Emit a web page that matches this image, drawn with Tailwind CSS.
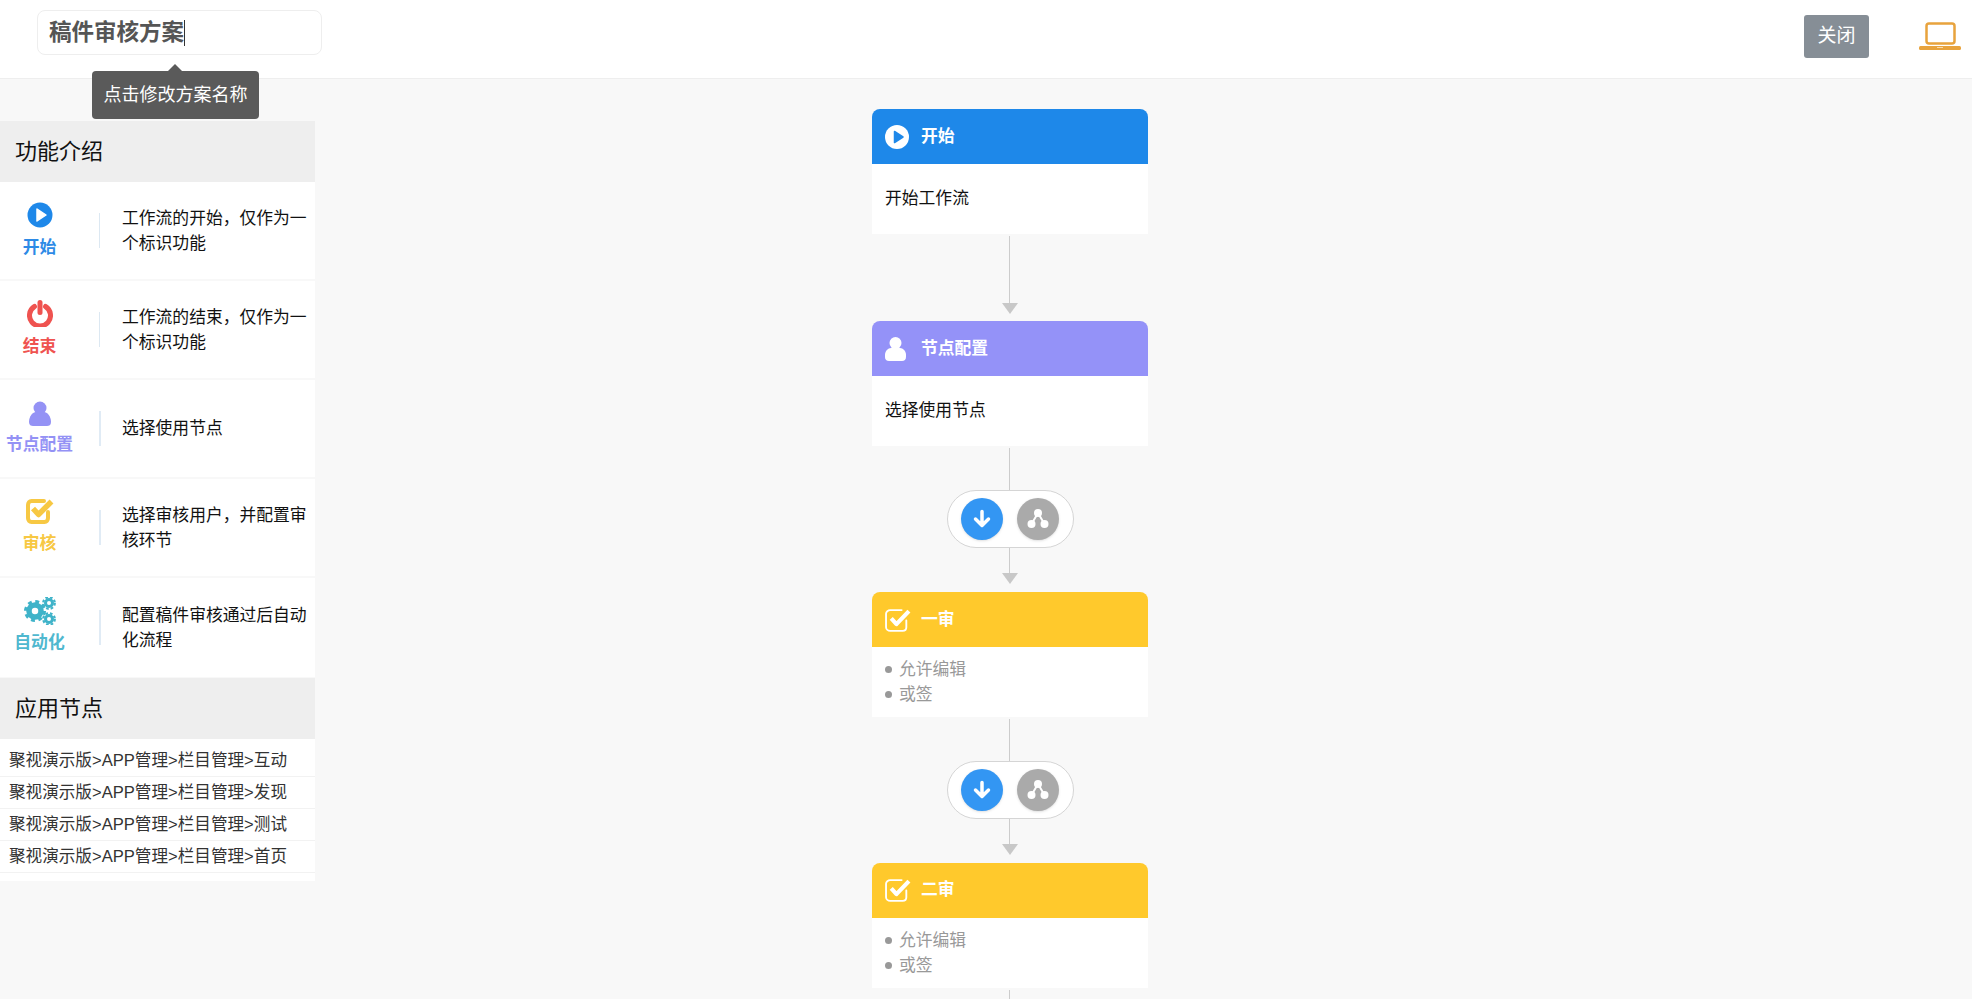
<!DOCTYPE html>
<html lang="zh-CN">

<head>
    <meta charset="UTF-8">
    <meta name="viewport" content="width=device-width, initial-scale=1.0">
    <title>稿件审核方案</title>
    <script src="https://cdn.jsdelivr.net/npm/@tailwindcss/browser@4"></script>
</head>

<body class="h-screen overflow-hidden bg-[#f8f8f8] font-['Liberation_Sans','Noto_Sans_CJK_SC',sans-serif] text-[16.8px] text-[#111]">

    <!-- Header -->
    <header class="relative flex h-[79px] items-start justify-between border-b border-[#eeeeee] bg-white pt-[10px]">
        <div class="ml-[37px] flex h-[45px] w-[285px] items-center rounded-[8px] border border-[#eeeeee] pl-[11px] text-[22.5px] font-bold text-[#555555]">
            稿件审核方案<span class="h-[26px] w-px bg-[#333333]"></span>
        </div>

        <div class="flex items-start">
            <button class="mt-[5px] h-[43px] w-[65px] rounded-[3px] bg-[#868e96] text-[19px] text-white">关闭</button>
            <svg class="mt-[11px] mr-[11px] ml-[50px]" width="42" height="30" viewBox="0 0 42 30">
                <rect x="7.500" y="2.500" width="28" height="20" rx="2.500" fill="none" stroke="#e8a33d" stroke-width="2.500" />
                <rect x="0" y="25" width="42" height="4" rx="1.500" fill="#e8a33d" />
                <rect x="18" y="26" width="6" height="1" fill="#f8d9a8" />
            </svg>
        </div>

        <!-- Tooltip -->
        <div class="absolute top-[71px] left-[92px] z-10 flex h-[48px] w-[167px] items-center justify-center rounded-[4px] bg-[#5a5a5a] text-[18px] text-white">
            <span class="absolute top-[-7px] left-[76px] h-0 w-0 border-x-[7px] border-b-[7px] border-x-transparent border-b-[#5a5a5a]"></span>
            点击修改方案名称
        </div>
    </header>

    <main class="flex">

        <!-- Sidebar -->
        <aside class="mt-[42px] w-[315px] shrink-0">
            <h2 class="flex h-[61px] items-center bg-[#eeeeee] pl-[15px] text-[22px]">功能介绍</h2>

            <div class="flex h-[99px] items-center border-b-2 border-[#f8f8f8] bg-white">
                <div class="flex w-[79px] flex-col items-center gap-[8px] leading-[24px] font-bold text-[#2d8ae6]">
                    <svg width="26" height="26" viewBox="0 0 26 26">
                        <circle cx="13" cy="13" r="12.500" fill="#1e88e9" />
                        <path d="M10 7 L19 13 L10 19 Z" fill="white" stroke="white" stroke-width="1.500" stroke-linejoin="round" />
                    </svg>
                    开始
                </div>
                <div class="mr-[22px] ml-[20px] h-[35px] w-[1px] bg-[#dce8f2]"></div>
                <p class="w-[190px] pt-[1px] leading-[25.500px]">工作流的开始，仅作为一个标识功能</p>
            </div>

            <div class="flex h-[99px] items-center border-b-2 border-[#f8f8f8] bg-white">
                <div class="flex w-[79px] flex-col items-center gap-[8px] leading-[24px] font-bold text-[#ef5350]">
                    <svg width="26" height="27" viewBox="0 0 26 27">
                        <path d="M7.500 6.500 A10.500 10.500 0 1 0 18.500 6.500" fill="none" stroke="#ef5350" stroke-width="5" stroke-linecap="round" />
                        <path d="M13 2.500 V12.500" fill="none" stroke="#ef5350" stroke-width="5" stroke-linecap="round" />
                    </svg>
                    结束
                </div>
                <div class="mr-[22px] ml-[20px] h-[35px] w-[1px] bg-[#dce8f2]"></div>
                <p class="w-[190px] pt-[1px] leading-[25.500px]">工作流的结束，仅作为一个标识功能</p>
            </div>

            <div class="flex h-[99px] items-center border-b-2 border-[#f8f8f8] bg-white">
                <div class="flex w-[79px] flex-col items-center gap-[6px] pt-[1px] leading-[24px] font-bold text-[#9492f5]">
                    <svg width="24" height="26" viewBox="0 0 24 26">
                        <circle cx="12" cy="7" r="6.500" fill="#9492f5" />
                        <path d="M1 21 C1 15 5 11 8 11 H16 C19 11 23 15 23 21 C23 24 21 25 19 25 H5 C3 25 1 24 1 21 Z" fill="#9492f5" />
                    </svg>
                    节点配置
                </div>
                <div class="mr-[21px] ml-[20px] h-[35px] w-[2px] bg-[#e0ebf5]"></div>
                <p class="w-[190px] pt-[1px] leading-[25.500px]">选择使用节点</p>
            </div>

            <div class="flex h-[99px] items-center border-b-2 border-[#f8f8f8] bg-white">
                <div class="flex w-[79px] flex-col items-center gap-[8px] leading-[24px] font-bold text-[#f7c843]">
                    <svg class="-mt-[2px]" width="28" height="26" viewBox="0 0 28 26">
                        <path d="M22 14 V20 C22 22.500 20.500 24 18.500 24 H5.500 C3.500 24 2 22.500 2 20 V7 C2 4.500 3.500 3 5.500 3 H18" fill="none" stroke="#f7c843" stroke-width="4" stroke-linecap="round" />
                        <path d="M7 10.500 L12.500 16.500 L25.500 3.500" fill="none" stroke="#f7c843" stroke-width="5.500" stroke-linejoin="round" />
                    </svg>
                    审核
                </div>
                <div class="mr-[21px] ml-[20px] h-[35px] w-[2px] bg-[#e0ebf5]"></div>
                <p class="w-[190px] pt-[1px] leading-[25.500px]">选择审核用户，并配置审核环节</p>
            </div>

            <div class="flex h-[99px] items-center bg-white">
                <div class="-mt-[3px] flex w-[79px] flex-col items-center gap-[6px] leading-[24px] font-bold text-[#4fb8cf]">
                    <svg width="32" height="28" viewBox="0 0 32 28">
                        <g fill="none" stroke="#3fb3c9">
                            <circle cx="11" cy="14" r="6" stroke-width="5.500" />
                            <circle cx="11" cy="14" r="9.500" stroke-width="3" stroke-dasharray="3.900 3.560" />
                            <circle cx="25" cy="6" r="3.500" stroke-width="3" />
                            <circle cx="25" cy="6" r="5.800" stroke-width="2.200" stroke-dasharray="2.600 2" />
                            <circle cx="25" cy="22" r="3.500" stroke-width="3" />
                            <circle cx="25" cy="22" r="5.800" stroke-width="2.200" stroke-dasharray="2.600 2" />
                        </g>
                    </svg>
                    自动化
                </div>
                <div class="mr-[21px] ml-[20px] h-[35px] w-[2px] bg-[#e0ebf5]"></div>
                <p class="w-[190px] pt-[1px] leading-[25.500px]">配置稿件审核通过后自动化流程</p>
            </div>

            <h2 class="mt-px flex h-[61px] items-center bg-[#eeeeee] pl-[15px] text-[22px]">应用节点</h2>

            <ul class="bg-white pt-[6px] pb-[8px] text-[16.600px] text-[#333333]">
                <li class="flex h-[32px] items-center border-b border-[#f2f2f2] pt-[2px] pl-[9px]">聚视演示版&gt;APP管理&gt;栏目管理&gt;互动</li>
                <li class="flex h-[32px] items-center border-b border-[#f2f2f2] pt-[2px] pl-[9px]">聚视演示版&gt;APP管理&gt;栏目管理&gt;发现</li>
                <li class="flex h-[32px] items-center border-b border-[#f2f2f2] pt-[2px] pl-[9px]">聚视演示版&gt;APP管理&gt;栏目管理&gt;测试</li>
                <li class="flex h-[32px] items-center border-b border-[#f2f2f2] pt-[2px] pl-[9px]">聚视演示版&gt;APP管理&gt;栏目管理&gt;首页</li>
            </ul>
        </aside>

        <!-- Flow canvas -->
        <section class="flex-1 pt-[30px] pl-[557px]">
            <div class="flex w-[276px] flex-col">

                <!-- 开始 -->
                <div class="flex h-[55px] items-center gap-[12px] rounded-t-[8px] bg-[#1e88e9] pl-[13px] font-bold text-white">
                    <svg width="24" height="24" viewBox="0 0 24 24">
                        <circle cx="12" cy="12" r="12" fill="white" />
                        <path d="M9.500 6.500 L18 12 L9.500 17.500 Z" fill="#1e88e9" stroke="#1e88e9" stroke-width="1.500" stroke-linejoin="round" />
                    </svg>
                    开始
                </div>
                <div class="flex h-[70px] items-center bg-white pl-[13px]">开始工作流</div>

                <div class="flex h-[87px] flex-col items-center pt-[2px]">
                    <div class="mr-px h-[67px] w-px bg-[#cccccc]"></div>
                    <svg width="16" height="11" viewBox="0 0 16 11"><path d="M0 0 H16 L8 11 Z" fill="#c8c8c8" /></svg>
                </div>

                <!-- 节点配置 -->
                <div class="flex h-[55px] items-center gap-[15px] rounded-t-[8px] bg-[#9492f8] pl-[13px] font-bold text-white">
                    <svg width="21" height="24" viewBox="0 0 21 24">
                        <circle cx="10.500" cy="6" r="6" fill="white" />
                        <path d="M0 18 C0 14 3 11 6 11 H15 C18 11 21 14 21 18 V20 C21 22.500 19.500 24 17 24 H4 C1.500 24 0 22.500 0 20 Z" fill="white" />
                    </svg>
                    节点配置
                </div>
                <div class="flex h-[70px] items-center bg-white pl-[13px]">选择使用节点</div>

                <div class="flex h-[146px] flex-col items-center pt-[2px]">
                    <div class="mr-px h-[42px] w-px bg-[#cccccc]"></div>
                    <div class="flex h-[58px] w-[127px] items-center justify-center gap-[14px] rounded-full border border-[#d5d5d5] bg-white">
                        <span class="flex h-[42px] w-[42px] items-center justify-center rounded-full bg-[#3396f3] shadow-sm">
                            <svg width="20" height="20" viewBox="0 0 20 20"><path d="M10 2.500 V16 M3.500 10 L10 16.500 L16.500 10" fill="none" stroke="white" stroke-width="3.500" stroke-linecap="round" stroke-linejoin="round" /></svg>
                        </span>
                        <span class="flex h-[42px] w-[42px] items-center justify-center rounded-full bg-[#aaaaaa] shadow-sm">
                            <svg width="22" height="22" viewBox="0 0 22 22"><circle cx="11" cy="5" r="4" fill="white" /><circle cx="4.500" cy="16" r="4" fill="white" /><circle cx="17.500" cy="16" r="4" fill="white" /><path d="M11 5 L4.500 16 M11 5 L17.500 16" stroke="white" stroke-width="2" /></svg>
                        </span>
                    </div>
                    <div class="mr-px h-[25px] w-px bg-[#cccccc]"></div>
                    <svg width="16" height="11" viewBox="0 0 16 11"><path d="M0 0 H16 L8 11 Z" fill="#c8c8c8" /></svg>
                </div>

                <!-- 一审 -->
                <div class="flex h-[55px] items-center gap-[10px] rounded-t-[8px] bg-[#ffc92c] pl-[13px] font-bold text-white">
                    <svg width="26" height="24" viewBox="0 0 25 23">
                        <path d="M20.500 12 V18.500 C20.500 20.500 19 22 17 22 H5 C3 22 1 20.500 1 18.500 V5.500 C1 3.500 3 2 5 2 H16" fill="none" stroke="white" stroke-width="1.800" stroke-linecap="round" />
                        <path d="M6 10 L11 15.500 L23 3" fill="none" stroke="white" stroke-width="4" stroke-linejoin="round" />
                    </svg>
                    一审
                </div>
                <div class="flex h-[70px] flex-col justify-center bg-white pl-[13px] leading-[25px] text-[#999999]">
                    <div class="flex items-center gap-[7px]"><span class="h-[7px] w-[7px] rounded-full bg-[#999999]"></span>允许编辑</div>
                    <div class="flex items-center gap-[7px]"><span class="h-[7px] w-[7px] rounded-full bg-[#999999]"></span>或签</div>
                </div>

                <div class="flex h-[145.500px] flex-col items-center pt-[2px]">
                    <div class="mr-px h-[42px] w-px bg-[#cccccc]"></div>
                    <div class="flex h-[58px] w-[127px] items-center justify-center gap-[14px] rounded-full border border-[#d5d5d5] bg-white">
                        <span class="flex h-[42px] w-[42px] items-center justify-center rounded-full bg-[#3396f3] shadow-sm">
                            <svg width="20" height="20" viewBox="0 0 20 20"><path d="M10 2.500 V16 M3.500 10 L10 16.500 L16.500 10" fill="none" stroke="white" stroke-width="3.500" stroke-linecap="round" stroke-linejoin="round" /></svg>
                        </span>
                        <span class="flex h-[42px] w-[42px] items-center justify-center rounded-full bg-[#aaaaaa] shadow-sm">
                            <svg width="22" height="22" viewBox="0 0 22 22"><circle cx="11" cy="5" r="4" fill="white" /><circle cx="4.500" cy="16" r="4" fill="white" /><circle cx="17.500" cy="16" r="4" fill="white" /><path d="M11 5 L4.500 16 M11 5 L17.500 16" stroke="white" stroke-width="2" /></svg>
                        </span>
                    </div>
                    <div class="mr-px h-[25px] w-px bg-[#cccccc]"></div>
                    <svg width="16" height="11" viewBox="0 0 16 11"><path d="M0 0 H16 L8 11 Z" fill="#c8c8c8" /></svg>
                </div>

                <!-- 二审 -->
                <div class="flex h-[55px] items-center gap-[10px] rounded-t-[8px] bg-[#ffc92c] pl-[13px] font-bold text-white">
                    <svg width="26" height="24" viewBox="0 0 25 23">
                        <path d="M20.500 12 V18.500 C20.500 20.500 19 22 17 22 H5 C3 22 1 20.500 1 18.500 V5.500 C1 3.500 3 2 5 2 H16" fill="none" stroke="white" stroke-width="1.800" stroke-linecap="round" />
                        <path d="M6 10 L11 15.500 L23 3" fill="none" stroke="white" stroke-width="4" stroke-linejoin="round" />
                    </svg>
                    二审
                </div>
                <div class="flex h-[70px] flex-col justify-center bg-white pl-[13px] leading-[25px] text-[#999999]">
                    <div class="flex items-center gap-[7px]"><span class="h-[7px] w-[7px] rounded-full bg-[#999999]"></span>允许编辑</div>
                    <div class="flex items-center gap-[7px]"><span class="h-[7px] w-[7px] rounded-full bg-[#999999]"></span>或签</div>
                </div>

                <div class="flex h-[40px] flex-col items-center pt-[2px]">
                    <div class="mr-px h-[38px] w-px bg-[#cccccc]"></div>
                </div>
            </div>
        </section>
    </main>
</body>

</html>
